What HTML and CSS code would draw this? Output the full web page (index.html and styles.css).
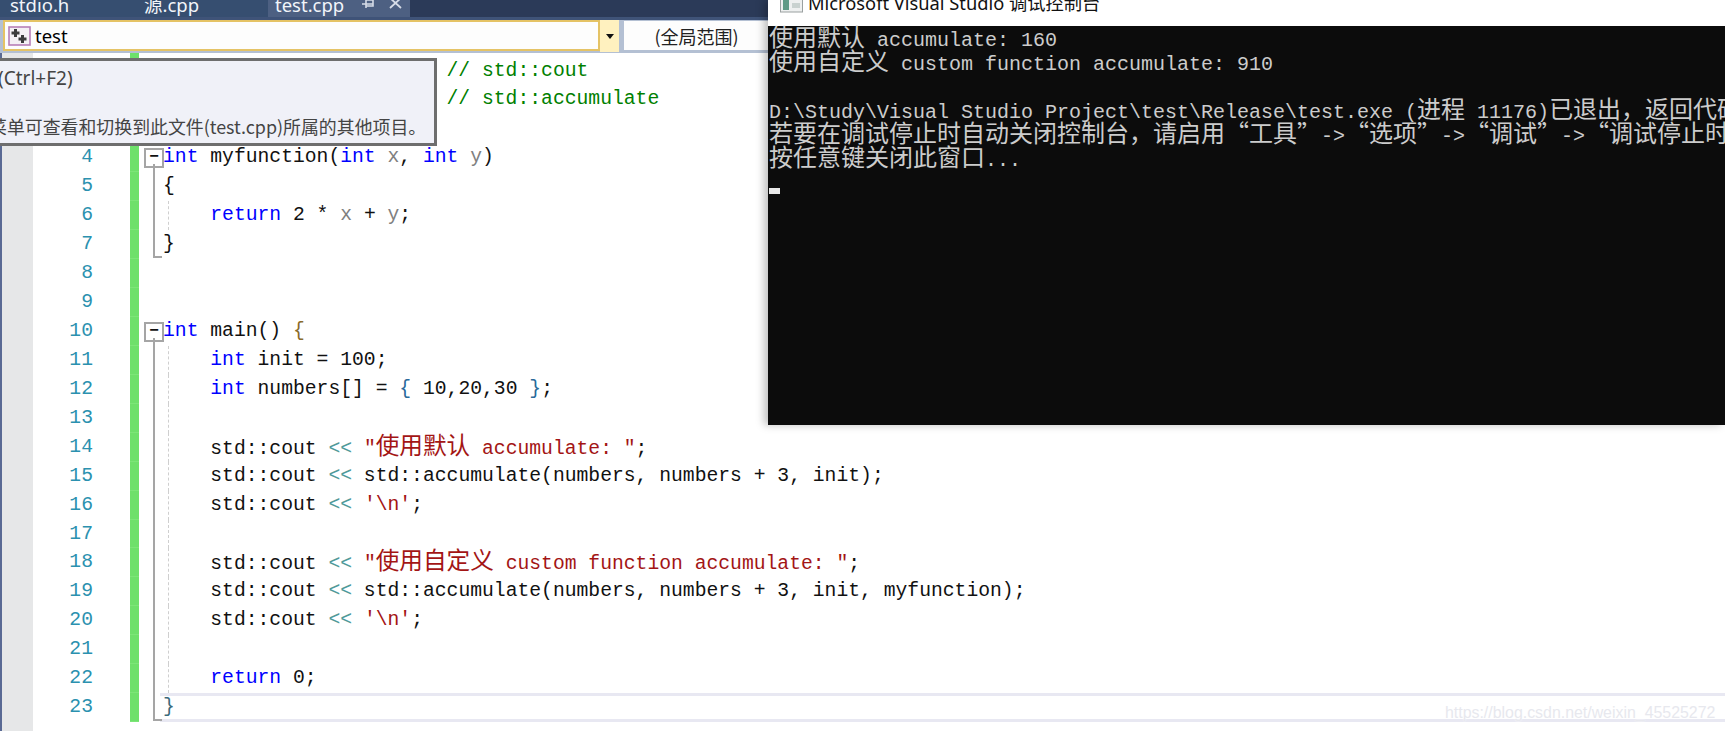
FILE: index.html
```html
<!DOCTYPE html>
<html lang="zh-CN">
<head>
<meta charset="utf-8">
<title>test.cpp</title>
<link rel="stylesheet" href="styles.css">
</head>
<body>
<div class="ide">
  <div class="tabs">
    <div class="tab tab-a">stdio.h</div>
    <div class="tab tab-b">源.cpp</div>
    <div class="tab tab-active">test.cpp
      <svg class="pin" width="14" height="12" viewBox="0 0 14 12"><path d="M1 5h4M5 0v9M5 1h7v6H5M5 5h7" fill="none" stroke="#d5dbe6" stroke-width="1.6"/></svg>
      <svg class="close" width="14" height="12" viewBox="0 0 14 12"><path d="M1 -1L12 9M12 -1L1 9" fill="none" stroke="#d5dbe6" stroke-width="1.8"/></svg>
    </div>
  </div>
  <div class="toolbar">
    <div class="combo">
      <svg class="proj" width="23" height="20" viewBox="0 0 23 20"><rect x="1" y="1" width="21" height="18" fill="#f4f0f4" stroke="#b77fb7" stroke-width="1.6"/><path d="M3.500 7h8M7.500 3v8M10.500 13h8M14.500 9v8" stroke="#3c3c3c" stroke-width="3" fill="none"/></svg>
      <span>test</span>
    </div>
    <div class="drop"><i></i></div>
    <div class="scope">(全局范围)</div>
  </div>
  <div class="editor">
    <div class="row first"><b class="num">1</b><i class="mark"></i><i class="fold"></i><code class="code">#include &lt;iostream&gt;     <em class="c">// std::cout</em></code></div>
    <div class="row"><b class="num">2</b><i class="mark"></i><i class="fold"></i><code class="code">#include &lt;numeric&gt;      <em class="c">// std::accumulate</em></code></div>
    <div class="row"><b class="num">3</b><i class="mark"></i><i class="fold"></i><code class="code"></code></div>
    <div class="row"><b class="num">4</b><i class="mark"></i><i class="fold start"></i><code class="code"><em class="k">int</em> myfunction(<em class="k">int</em> <em class="p">x</em>, <em class="k">int</em> <em class="p">y</em>)</code></div>
    <div class="row"><b class="num">5</b><i class="mark"></i><i class="fold mid"></i><code class="code">{</code></div>
    <div class="row guide"><b class="num">6</b><i class="mark"></i><i class="fold mid"></i><code class="code">    <em class="k">return</em> 2 * <em class="p">x</em> + <em class="p">y</em>;</code></div>
    <div class="row"><b class="num">7</b><i class="mark"></i><i class="fold end"></i><code class="code">}</code></div>
    <div class="row"><b class="num">8</b><i class="mark"></i><i class="fold"></i><code class="code"></code></div>
    <div class="row"><b class="num">9</b><i class="mark"></i><i class="fold"></i><code class="code"></code></div>
    <div class="row"><b class="num">10</b><i class="mark"></i><i class="fold start"></i><code class="code"><em class="k">int</em> main() <em class="br">{</em></code></div>
    <div class="row guide"><b class="num">11</b><i class="mark"></i><i class="fold mid"></i><code class="code">    <em class="k">int</em> init = 100;</code></div>
    <div class="row guide"><b class="num">12</b><i class="mark"></i><i class="fold mid"></i><code class="code">    <em class="k">int</em> numbers[] = <em class="bl">{</em> 10,20,30 <em class="bl">}</em>;</code></div>
    <div class="row guide"><b class="num">13</b><i class="mark"></i><i class="fold mid"></i><code class="code"></code></div>
    <div class="row guide"><b class="num">14</b><i class="mark"></i><i class="fold mid"></i><code class="code">    std::cout <em class="o">&lt;&lt;</em> <em class="s">"<span class="cjk">使用默认</span> accumulate: "</em>;</code></div>
    <div class="row guide"><b class="num">15</b><i class="mark"></i><i class="fold mid"></i><code class="code">    std::cout <em class="o">&lt;&lt;</em> std::accumulate(numbers, numbers + 3, init);</code></div>
    <div class="row guide"><b class="num">16</b><i class="mark"></i><i class="fold mid"></i><code class="code">    std::cout <em class="o">&lt;&lt;</em> <em class="s">'\n'</em>;</code></div>
    <div class="row guide"><b class="num">17</b><i class="mark"></i><i class="fold mid"></i><code class="code"></code></div>
    <div class="row guide"><b class="num">18</b><i class="mark"></i><i class="fold mid"></i><code class="code">    std::cout <em class="o">&lt;&lt;</em> <em class="s">"<span class="cjk">使用自定义</span> custom function accumulate: "</em>;</code></div>
    <div class="row guide"><b class="num">19</b><i class="mark"></i><i class="fold mid"></i><code class="code">    std::cout <em class="o">&lt;&lt;</em> std::accumulate(numbers, numbers + 3, init, myfunction);</code></div>
    <div class="row guide"><b class="num">20</b><i class="mark"></i><i class="fold mid"></i><code class="code">    std::cout <em class="o">&lt;&lt;</em> <em class="s">'\n'</em>;</code></div>
    <div class="row guide"><b class="num">21</b><i class="mark"></i><i class="fold mid"></i><code class="code"></code></div>
    <div class="row guide"><b class="num">22</b><i class="mark"></i><i class="fold mid"></i><code class="code">    <em class="k">return</em> 0;</code></div>
    <div class="row current"><b class="num">23</b><i class="mark"></i><i class="fold end"></i><code class="code"><em class="br2">}</em></code></div>
  </div>
</div>

<div class="tooltip">
  <p class="tip-a">(Ctrl+F2)</p>
  <p class="tip-b">菜单可查看和切换到此文件(test.cpp)所属的其他项目。</p>
</div>

<div class="console">
  <div class="con-title">
    <svg width="23" height="13" viewBox="0 0 23 13"><rect x="0.500" y="-6" width="22" height="18" fill="#eef0f0" stroke="#9aa0a0"/><rect x="3" y="-4" width="6" height="14" fill="#5f9a86"/><rect x="12" y="3" width="8" height="5" fill="#c9d2d0"/></svg>
    <span>Microsoft Visual Studio 调试控制台</span>
  </div>
  <div class="con-body">
    <div class="con-line"><span class="cjk">使用默认</span> accumulate: 160</div>
    <div class="con-line"><span class="cjk">使用自定义</span> custom function accumulate: 910</div>
    <div class="con-line"></div>
    <div class="con-line">D:\Study\Visual Studio Project\test\Release\test.exe (<span class="cjk">进程</span> 11176)<span class="cjk">已退出，返回代码为</span> 0。</div>
    <div class="con-line"><span class="cjk">若要在调试停止时自动关闭控制台，请启用“工具”</span>-&gt;<span class="cjk">“选项”</span>-&gt;<span class="cjk">“调试”</span>-&gt;<span class="cjk">“调试停止时自动关闭控制台”。</span></div>
    <div class="con-line"><span class="cjk">按任意键关闭此窗口</span>...</div>
    <div class="cursor"></div>
  </div>
</div>

<div class="watermark">https://blog.csdn.net/weixin_45525272</div>
</body>
</html>
```
FILE: styles.css
```css
* { box-sizing: border-box; }
html, body { margin: 0; height: 731px; overflow: hidden; background: #fff; }
body { position: relative; width: 1725px; }
em, i, b { font-style: normal; font-weight: normal; }

.ide { display: flex; flex-direction: column; height: 731px; }

.tabs { display: flex; height: 17px; background: #2b3a58; overflow: hidden; flex: none; }
.tab { font: 18.500px/1 "Noto Sans", "Noto Sans CJK SC", sans-serif; color: #f2f5fa; height: 17px; line-height: 10px; white-space: nowrap; background: #364e70; }
.tab-a { width: 134px; padding-left: 10px; }
.tab-b { width: 134px; padding-left: 10px; }
.tab-active { width: 142px; padding-left: 7px; background: #4d6082; display: flex; align-items: flex-start; }
.pin { margin-left: 17px; margin-top: -1px; }
.close { margin-left: 14px; margin-top: -1px; }

.toolbar { display: flex; height: 36px; flex: none; background: #b4c0d3; border-top: 3px solid #3f5378; padding: 0 0 2px 3px; }
.combo { width: 597px; background: #fdfdfd; border: 2px solid #e5c365; display: flex; align-items: center; padding-left: 3px; gap: 4px; font: 18.500px "Noto Sans", sans-serif; color: #000; }
.proj { flex: none; }
.drop { width: 19px; margin-bottom: -1px; background: #fff1bf; display: flex; align-items: center; justify-content: center; }
.drop i { width: 0; height: 0; border-left: 4px solid transparent; border-right: 4px solid transparent; border-top: 5px solid #111; }
.scope { width: 145px; margin: 1px 0 1px 5px; background: #fdfdfd; font: 18px "Noto Sans CJK SC", sans-serif; color: #222; display: flex; align-items: center; justify-content: center; }

.editor { flex: 1; padding-top: 3.500px; padding-left: 2px; background: linear-gradient(90deg, #e6e7e8 33px, #fff 33px); position: relative; }
.editor::before { content: ""; position: absolute; left: 0; top: 0; bottom: 0; width: 2px; background: #5a6a94; }
.row { display: flex; height: 28.950px; position: relative; }
.num { width: 91px; text-align: right; font: 19.700px/29px "Liberation Mono", monospace; color: #2b91af; flex: none; }
.mark { width: 9px; margin-left: 37px; background: #6ee06b; border-bottom: 1px solid #7ce578; flex: none; }
.first .mark { margin-top: -3.500px; }
.fold { width: 24px; flex: none; position: relative; }
.fold.start::before { content: "−"; position: absolute; left: 5px; top: 5px; width: 16px; height: 16px; border: 2px solid #a5a5a5; background: #fff; font: bold 16px/11px "Liberation Sans", sans-serif; color: #111; text-align: center; }
.fold.start::after { content: ""; position: absolute; left: 14px; top: 21px; bottom: 0; width: 2px; background: #a5a5a5; }
.fold.mid::before { content: ""; position: absolute; left: 14px; top: 0; bottom: 0; width: 2px; background: #a5a5a5; }
.fold.end::before { content: ""; position: absolute; left: 14px; top: 0; bottom: 1px; width: 7px; border-left: 2px solid #a5a5a5; border-bottom: 2px solid #a5a5a5; }
.guide::after { content: ""; position: absolute; left: 166px; top: 0; bottom: 0; border-left: 1.500px dashed #cfcfcf; }
.code { font: 19.700px/29px "Liberation Mono", "Noto Sans CJK SC", monospace; color: #111; white-space: pre; flex: 1; }
.current .code { border-top: 3px solid #e8e8f2; border-bottom: 3px solid #e8e8f2; line-height: 23px; margin-left: -3px; padding-left: 3px; height: 29px; }
.cjk { font-family: "Noto Sans CJK SC", sans-serif; font-size: 23.640px; line-height: 1; }
.k { color: #0000ff; }
.c { color: #008000; }
.s { color: #a31515; }
.o { color: #4f9a9a; }
.p { color: #808080; }
.br { color: #8a6a2a; }
.bl { color: #2a6a9a; }
.br2 { color: #3a6a7a; }

.tooltip { position: absolute; left: -6px; top: 58px; width: 443px; height: 88px; background: #f0f1f8; border: 3px solid #6e6e6e; color: #444; font: 17.900px "Noto Sans CJK SC", "Noto Sans", sans-serif; display: flex; flex-direction: column; }
.tooltip p { margin: 0; white-space: nowrap; line-height: 24px; }
.tip-a { padding: 5px 0 0 1px; font-size: 19px; font-family: "Noto Sans", sans-serif; }
.tip-b { margin-top: 24px !important; margin-left: -8px !important; }

.console { position: absolute; left: 768px; top: 0; width: 957px; height: 425px; background: #fff; box-shadow: -4px 0 8px rgba(0,0,0,.25); display: flex; flex-direction: column; overflow: hidden; }
.con-title { height: 26px; flex: none; display: flex; align-items: flex-start; padding-left: 12px; gap: 5px; font: 18.300px/5px "Noto Sans", "Noto Sans CJK SC", sans-serif; color: #111; white-space: nowrap; overflow: hidden; }
.con-body { flex: 1; background: #0c0c0c; color: #cccccc; padding: 0 0 0 1px; font: 20px/20px "Liberation Mono", "Noto Sans CJK SC", monospace; }
.con-line { height: 24px; white-space: pre; }
.con-line:first-child { margin-top: -2px; }
.con-body .cjk { font-size: 24px; }
.cursor { width: 11px; height: 6px; background: #e8e8e8; margin-top: 20px; }

.watermark { position: absolute; left: 1445px; top: 703px; font: 15.900px/20px "Liberation Sans", sans-serif; color: #e7e8ee; text-shadow: 0 0 2px #fff; white-space: nowrap; }
```
